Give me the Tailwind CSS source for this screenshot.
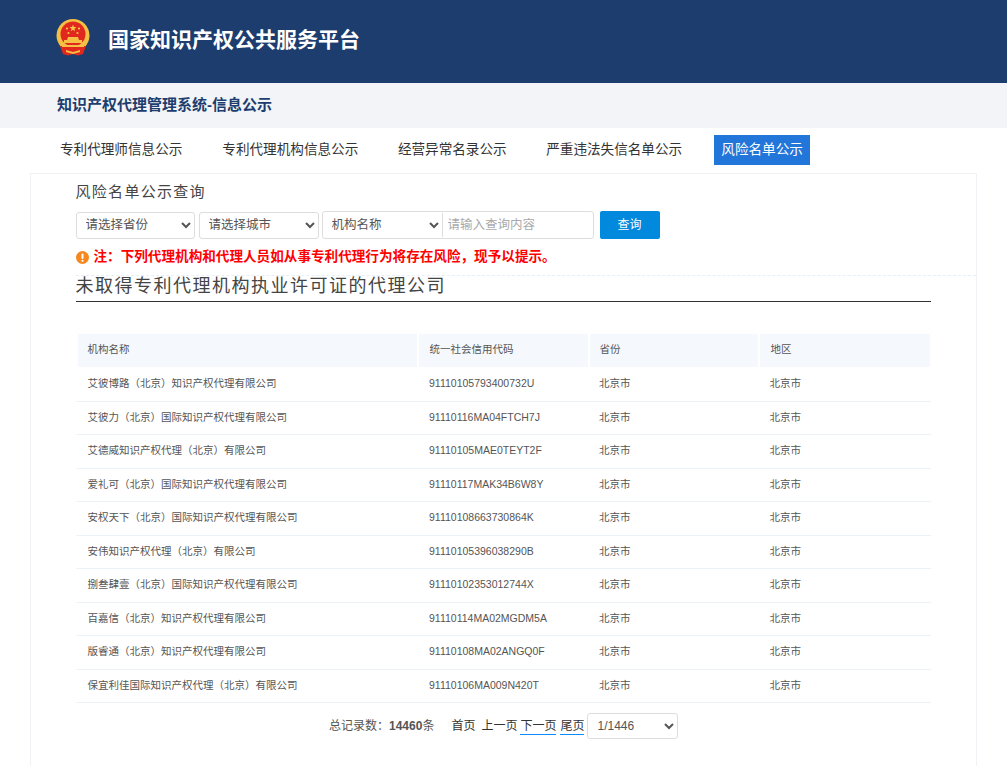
<!DOCTYPE html>
<html lang="zh-CN"><head><meta charset="utf-8">
<script src="https://cdn.jsdelivr.net/npm/@tailwindcss/browser@4"></script>
<title>风险名单公示</title></head>
<body class="bg-white overflow-hidden h-[766px] font-['Liberation_Sans','Noto_Sans_CJK_SC',sans-serif] text-[#333]">
<header class="h-[83px] bg-[#1c3d6e] flex items-start pl-[55px] pt-[19px] gap-[17px]">
  <svg class="w-[36px] h-[37px] shrink-0" viewBox="0 0 36 37">
    <circle cx="18" cy="16.5" r="16.5" fill="#f5c043"/>
    <circle cx="18" cy="15" r="12.5" fill="#e0281e"/>
    <path d="M18 5.5l.9 2.6h2.7l-2.2 1.6.8 2.6-2.2-1.6-2.2 1.6.8-2.6-2.2-1.6h2.7z" fill="#f7c948"/>
    <circle cx="12" cy="9.5" r="1.1" fill="#f7c948"/><circle cx="24" cy="9.5" r="1.1" fill="#f7c948"/>
    <circle cx="13.5" cy="14" r="1.1" fill="#f7c948"/><circle cx="22.5" cy="14" r="1.1" fill="#f7c948"/>
    <path d="M9 24v-3h3l1-3h10l1 3h3v3z" fill="#f5c043"/>
    <path d="M5 27h26l-3 8-5 1.5-5-1.5-5 1.5-5-1.5z" fill="#e0281e"/>
    <path d="M7 26h22v2H7zM11 31l7 2 7-2v2l-7 2-7-2z" fill="#f5c043"/>
  </svg>
  <h1 class="text-[21px] leading-[41px] font-bold text-white">国家知识产权公共服务平台</h1>
</header>
<div class="h-[45px] bg-[#f2f4f7] pl-[57px] flex items-center">
  <h2 class="text-[15px] font-bold text-[#1c3d6e]">知识产权代理管理系统-信息公示</h2>
</div>
<nav class="h-[45px] pl-[52px] pt-[7px] flex items-start text-[13.6px] text-[#333]">
  <a class="h-[30px] leading-[30px] px-2">专利代理师信息公示</a>
  <a class="h-[30px] leading-[30px] px-2 ml-[24px]">专利代理机构信息公示</a>
  <a class="h-[30px] leading-[30px] px-2 ml-[23.6px]">经营异常名录公示</a>
  <a class="h-[30px] leading-[30px] px-2 ml-[23.6px]">严重违法失信名单公示</a>
  <a class="h-[30px] leading-[30px] px-[7.2px] ml-[24px] bg-[#2275d9] text-white">风险名单公示</a>
</nav>
<main class="relative mx-[30px] h-[620px] border border-[#f0f2f5] pl-[44.5px] pr-[45px]">
  <h3 class="text-[15px] tracking-[1.3px] leading-[20px] mt-[8px] text-[#444]">风险名单公示查询</h3>
  <form class="flex items-center h-[28px] mt-[9px] text-[12.5px] text-[#555]">
    <select class="w-[119px] h-[27px] border border-[#ddd] rounded-[3px] pl-[5px] bg-white"><option>请选择省份</option></select>
    <select class="w-[120px] h-[27px] ml-[4px] border border-[#ddd] rounded-[3px] pl-[5px] bg-white"><option>请选择城市</option></select>
    <div class="ml-[3px] flex h-[28px] w-[272px] border border-[#ddd] rounded-[3px] items-center">
      <select class="w-[120px] h-[24px] border-r border-[#ddd] pl-[5px] bg-white"><option>机构名称</option></select>
      <input class="flex-1 min-w-0 pl-[5px] h-[24px] outline-none placeholder:text-[#aaa]" placeholder="请输入查询内容">
    </div>
    <button type="button" class="ml-[6px] w-[60px] h-[28px] rounded-[2px] bg-[#0089dd] text-white text-[12px]">查询</button>
  </form>
  <p class="flex items-center h-[20px] mt-[8px] text-[13.6px] leading-[20px] font-bold text-[#ff0000]">
    <svg class="w-[13px] h-[13px] mr-[5px] shrink-0" viewBox="0 0 13 13"><circle cx="6.5" cy="6.5" r="6.5" fill="#f5891f"/><rect x="5.5" y="2.5" width="2" height="5.5" rx="1" fill="#fff"/><circle cx="6.5" cy="9.8" r="1.1" fill="#fff"/></svg>
    注：下列代理机构和代理人员如从事专利代理行为将存在风险，现予以提示。
  </p>
  <div class="absolute left-[45px] right-0 top-[101px] border-t border-dashed border-[#e6eff7]"></div>
  <h3 class="relative mt-[7px] w-[855px] h-[28px] border-b border-[#333] text-[18px] leading-[25px] tracking-[1.5px] text-[#444]">未取得专利代理机构执业许可证的代理公司</h3>
  <table class="w-[855px] mt-[32px] table-fixed border-separate border-spacing-0 text-[10.5px] text-[#555]">
    <colgroup><col class="w-[342px]"><col class="w-[171px]"><col class="w-[170px]"><col class="w-[172px]"></colgroup>
    <thead><tr class="h-[33px] text-left">
      <th class="font-normal pl-[10px] pb-[1px] bg-[#f5f8fc] border-x border-white border-l-2">机构名称</th>
      <th class="font-normal pl-[11px] pb-[1px] bg-[#f5f8fc] border-x border-white">统一社会信用代码</th>
      <th class="font-normal pl-[10px] pb-[1px] bg-[#f5f8fc] border-x border-white">省份</th>
      <th class="font-normal pl-[11px] pb-[1px] bg-[#f5f8fc] border-x border-white">地区</th>
    </tr></thead>
    <tbody>
      <tr class="h-[34.5px]"><td class="pl-[12px] border-b border-[#edf1f8]">艾彼博路（北京）知识产权代理有限公司</td><td class="pl-[11.5px] border-b border-[#edf1f8]">91110105793400732U</td><td class="pl-[10.5px] border-b border-[#edf1f8]">北京市</td><td class="pl-[11px] border-b border-[#edf1f8]">北京市</td></tr>
      <tr class="h-[33.5px]"><td class="pl-[12px] border-b border-[#edf1f8]">艾彼力（北京）国际知识产权代理有限公司</td><td class="pl-[11.5px] border-b border-[#edf1f8]">91110116MA04FTCH7J</td><td class="pl-[10.5px] border-b border-[#edf1f8]">北京市</td><td class="pl-[11px] border-b border-[#edf1f8]">北京市</td></tr>
      <tr class="h-[33.5px]"><td class="pl-[12px] border-b border-[#edf1f8]">艾德威知识产权代理（北京）有限公司</td><td class="pl-[11.5px] border-b border-[#edf1f8]">91110105MAE0TEYT2F</td><td class="pl-[10.5px] border-b border-[#edf1f8]">北京市</td><td class="pl-[11px] border-b border-[#edf1f8]">北京市</td></tr>
      <tr class="h-[33.5px]"><td class="pl-[12px] border-b border-[#edf1f8]">爱礼可（北京）国际知识产权代理有限公司</td><td class="pl-[11.5px] border-b border-[#edf1f8]">91110117MAK34B6W8Y</td><td class="pl-[10.5px] border-b border-[#edf1f8]">北京市</td><td class="pl-[11px] border-b border-[#edf1f8]">北京市</td></tr>
      <tr class="h-[33.5px]"><td class="pl-[12px] border-b border-[#edf1f8]">安权天下（北京）国际知识产权代理有限公司</td><td class="pl-[11.5px] border-b border-[#edf1f8]">91110108663730864K</td><td class="pl-[10.5px] border-b border-[#edf1f8]">北京市</td><td class="pl-[11px] border-b border-[#edf1f8]">北京市</td></tr>
      <tr class="h-[33.5px]"><td class="pl-[12px] border-b border-[#edf1f8]">安伟知识产权代理（北京）有限公司</td><td class="pl-[11.5px] border-b border-[#edf1f8]">91110105396038290B</td><td class="pl-[10.5px] border-b border-[#edf1f8]">北京市</td><td class="pl-[11px] border-b border-[#edf1f8]">北京市</td></tr>
      <tr class="h-[33.5px]"><td class="pl-[12px] border-b border-[#edf1f8]">捌叁肆壹（北京）国际知识产权代理有限公司</td><td class="pl-[11.5px] border-b border-[#edf1f8]">91110102353012744X</td><td class="pl-[10.5px] border-b border-[#edf1f8]">北京市</td><td class="pl-[11px] border-b border-[#edf1f8]">北京市</td></tr>
      <tr class="h-[33.5px]"><td class="pl-[12px] border-b border-[#edf1f8]">百嘉信（北京）知识产权代理有限公司</td><td class="pl-[11.5px] border-b border-[#edf1f8]">91110114MA02MGDM5A</td><td class="pl-[10.5px] border-b border-[#edf1f8]">北京市</td><td class="pl-[11px] border-b border-[#edf1f8]">北京市</td></tr>
      <tr class="h-[33.5px]"><td class="pl-[12px] border-b border-[#edf1f8]">版睿通（北京）知识产权代理有限公司</td><td class="pl-[11.5px] border-b border-[#edf1f8]">91110108MA02ANGQ0F</td><td class="pl-[10.5px] border-b border-[#edf1f8]">北京市</td><td class="pl-[11px] border-b border-[#edf1f8]">北京市</td></tr>
      <tr class="h-[33.5px]"><td class="pl-[12px] border-b border-[#edf1f8]">保宜利佳国际知识产权代理（北京）有限公司</td><td class="pl-[11.5px] border-b border-[#edf1f8]">91110106MA009N420T</td><td class="pl-[10.5px] border-b border-[#edf1f8]">北京市</td><td class="pl-[11px] border-b border-[#edf1f8]">北京市</td></tr>
    </tbody>
  </table>
  <div class="flex items-center mt-[10px] ml-[253.5px] h-[26px] text-[12px] text-[#555]">
    <span>总记录数：</span><b>14460</b><span>条</span>
    <a class="ml-[17px] text-[#333]">首页</a><a class="ml-[6px] text-[#333]">上一页</a>
    <a class="ml-[3px] text-[#333] leading-[15px] shadow-[0_1px_0_#0a8cff]">下一页</a>
    <a class="ml-[4px] text-[#333] leading-[15px] shadow-[0_1px_0_#0a8cff]">尾页</a>
    <select class="ml-[3px] w-[91px] h-[26px] border border-[#ddd] rounded-[3px] pl-[5px] bg-white"><option>1/1446</option></select>
  </div>
</main>
</body></html>
